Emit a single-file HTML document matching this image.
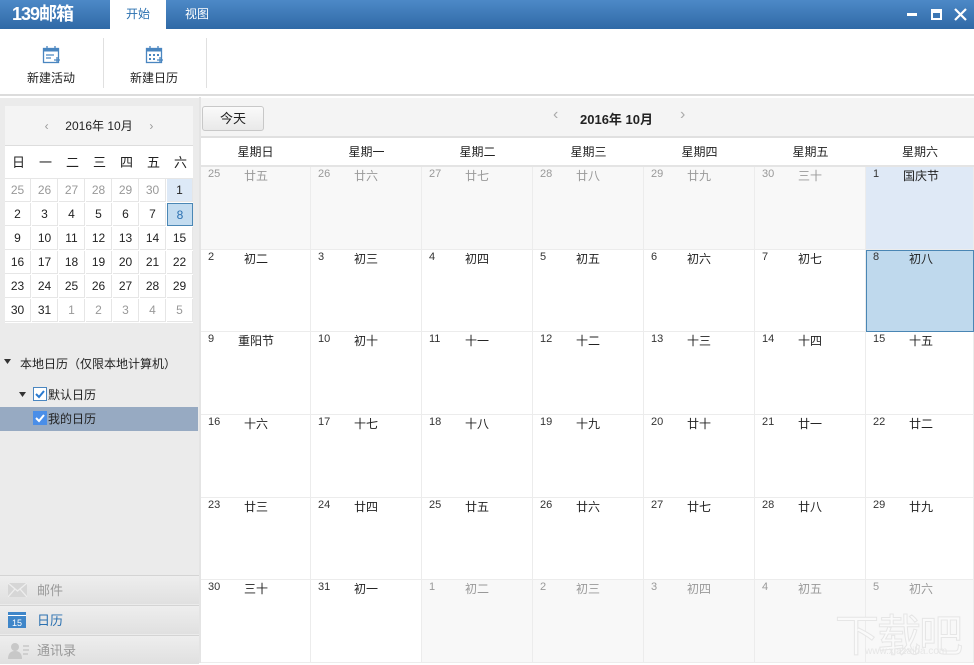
<!DOCTYPE html>
<html><head><meta charset="utf-8"><style>
*{margin:0;padding:0;box-sizing:border-box}
body{width:974px;height:663px;overflow:hidden;position:relative;background:#fff;font-family:"Liberation Sans","Noto Sans CJK SC","WenQuanYi Zen Hei",sans-serif;font-size:12px;color:#222}
.a{position:absolute}
.title{left:0;top:0;width:974px;height:29px;background:linear-gradient(#4d89c7,#2f69a6)}
.logo{left:12px;top:0;line-height:29px;color:#fff;font-weight:bold;font-size:18px;letter-spacing:-1px}
.tab1{left:110px;top:0;width:56px;height:29px;background:#fff;color:#2a70b0;text-align:center;line-height:29px}
.tab2{left:185px;top:0;width:50px;height:29px;color:#fff;line-height:29px}
.tb{top:29px;height:67px;width:974px;left:0;background:#fff;border-bottom:2px solid #dcdcdc}
.side{left:0;top:98px;width:199px;height:565px;background:#ebebeb}
.mini{left:5px;top:106px;width:188px;height:217px;background:#fff}
.mh{left:5px;top:106px;width:188px;height:40px;background:#f4f4f4;border-bottom:1px solid #ddd;text-align:center;line-height:40px;font-size:12px}
.mc{position:absolute;width:26px;height:23px;text-align:center;line-height:23px;font-size:12px;border-right:1px solid #e6e6e6;border-bottom:1px solid #e6e6e6}
.g{color:#999}
.main{left:199px;top:97px;width:775px;height:566px;border-left:2px solid #e4e4e4}
.hdr{left:201px;top:98px;width:773px;height:40px;background:#f4f4f4;border-bottom:2px solid #e0e0e0}
.today{left:202px;top:106px;width:62px;height:25px;border:1px solid #c8c8c8;border-radius:3px;background:linear-gradient(#fafafa,#e9e9e9);text-align:center;line-height:23px;font-size:13px}
.wd{position:absolute;top:138px;height:29px;width:111px;text-align:center;line-height:29px;border-bottom:2px solid #e4e4e4}
.c{position:absolute;border-right:1px solid #ececec;border-bottom:1px solid #ececec}
.c .n{position:absolute;left:7px;top:1px;font-size:11px;color:#333}
.c .l{position:absolute;left:30px;width:50px;top:0;text-align:center}
.c.o{background:#f8f8f8;color:#999}
.c.o .n{color:#999}
.nav{position:absolute;left:0;width:199px;height:29px;background:linear-gradient(#eeeeee,#e0e0e0);border-top:1px solid #d4d4d4;color:#999;font-size:13px;line-height:29px}
</style></head><body>
<div class="a title"></div>
<div class="a logo">139邮箱</div>
<div class="a tab1">开始</div>
<div class="a tab2">视图</div>
<svg class="a" style="left:905px;top:8px" width="64" height="14"><rect x="2" y="5" width="10" height="3" fill="#fff"/><rect x="26" y="1" width="11" height="11" fill="#fff"/><rect x="28" y="5" width="7" height="5" fill="#3d77b4"/><path d="M50 1L61 12M61 1L50 12" stroke="#fff" stroke-width="2.2"/></svg>
<div class="a tb"></div>
<div class="a" style="left:103px;top:38px;width:1px;height:50px;background:#e0e0e0"></div>
<div class="a" style="left:206px;top:38px;width:1px;height:50px;background:#e0e0e0"></div>
<svg class="a" style="left:42px;top:45px" width="20" height="20"><rect x="1.5" y="3.5" width="15" height="14" fill="none" stroke="#4a86c0" stroke-width="1.3"/><rect x="1.5" y="3.5" width="15" height="3" fill="#4a86c0"/><path d="M5 1v4M13 1v4M4 10h8M4 13h5M12 15h6M15 12v6" stroke="#4a86c0" stroke-width="1.3"/></svg>
<svg class="a" style="left:145px;top:45px" width="20" height="20"><rect x="1.5" y="3.5" width="15" height="14" fill="none" stroke="#4a86c0" stroke-width="1.3"/><rect x="1.5" y="3.5" width="15" height="3" fill="#4a86c0"/><path d="M5 1v4M13 1v4" stroke="#4a86c0" stroke-width="1.3"/><g fill="#4a86c0"><rect x="4" y="9" width="2" height="2"/><rect x="8" y="9" width="2" height="2"/><rect x="12" y="9" width="2" height="2"/><rect x="4" y="13" width="2" height="2"/><rect x="8" y="13" width="2" height="2"/></g><path d="M12 15h6M15 12v6" stroke="#4a86c0" stroke-width="1.3"/></svg>
<div class="a" style="left:27px;top:69px;font-size:12px">新建活动</div>
<div class="a" style="left:130px;top:69px;font-size:12px">新建日历</div>

<div class="a side"></div>
<div class="a mini"></div>
<div class="a mh"><span style="color:#999">‹</span>&nbsp;&nbsp;&nbsp;&nbsp;&nbsp;2016年 10月&nbsp;&nbsp;&nbsp;&nbsp;&nbsp;<span style="color:#999">›</span></div>
<div class="a" style="left:5px;top:148px;width:188px;height:31px;border-bottom:1px solid #e6e6e6"></div>
<div class="a" style="left:5px;top:152px;width:189px;font-size:13px;display:flex"><span style="width:27px;text-align:center">日</span><span style="width:27px;text-align:center">一</span><span style="width:27px;text-align:center">二</span><span style="width:27px;text-align:center">三</span><span style="width:27px;text-align:center">四</span><span style="width:27px;text-align:center">五</span><span style="width:27px;text-align:center">六</span></div>
<div class="a" style="left:5px;top:179px;width:189px;height:144px">
<div class="mc g" style="left:0;top:0">25</div><div class="mc g" style="left:27px;top:0">26</div><div class="mc g" style="left:54px;top:0">27</div><div class="mc g" style="left:81px;top:0">28</div><div class="mc g" style="left:108px;top:0">29</div><div class="mc g" style="left:135px;top:0">30</div><div class="mc" style="left:162px;top:0;background:#dde9f7">1</div>
<div class="mc" style="left:0;top:24px">2</div><div class="mc" style="left:27px;top:24px">3</div><div class="mc" style="left:54px;top:24px">4</div><div class="mc" style="left:81px;top:24px">5</div><div class="mc" style="left:108px;top:24px">6</div><div class="mc" style="left:135px;top:24px">7</div><div class="mc" style="left:162px;top:24px;background:#c3dcf0;border:1px solid #4a87b5;color:#2a70b0">8</div>
<div class="mc" style="left:0;top:48px">9</div><div class="mc" style="left:27px;top:48px">10</div><div class="mc" style="left:54px;top:48px">11</div><div class="mc" style="left:81px;top:48px">12</div><div class="mc" style="left:108px;top:48px">13</div><div class="mc" style="left:135px;top:48px">14</div><div class="mc" style="left:162px;top:48px">15</div>
<div class="mc" style="left:0;top:72px">16</div><div class="mc" style="left:27px;top:72px">17</div><div class="mc" style="left:54px;top:72px">18</div><div class="mc" style="left:81px;top:72px">19</div><div class="mc" style="left:108px;top:72px">20</div><div class="mc" style="left:135px;top:72px">21</div><div class="mc" style="left:162px;top:72px">22</div>
<div class="mc" style="left:0;top:96px">23</div><div class="mc" style="left:27px;top:96px">24</div><div class="mc" style="left:54px;top:96px">25</div><div class="mc" style="left:81px;top:96px">26</div><div class="mc" style="left:108px;top:96px">27</div><div class="mc" style="left:135px;top:96px">28</div><div class="mc" style="left:162px;top:96px">29</div>
<div class="mc" style="left:0;top:120px">30</div><div class="mc" style="left:27px;top:120px">31</div><div class="mc g" style="left:54px;top:120px">1</div><div class="mc g" style="left:81px;top:120px">2</div><div class="mc g" style="left:108px;top:120px">3</div><div class="mc g" style="left:135px;top:120px">4</div><div class="mc g" style="left:162px;top:120px">5</div>
</div>
<svg class="a" style="left:4px;top:359px" width="8" height="6"><path d="M0 0h7L3.5 5z" fill="#333"/></svg>
<div class="a" style="left:20px;top:355px;font-size:12px">本地日历（仅限本地计算机）</div>
<div class="a" style="left:0;top:407px;width:198px;height:24px;background:#97aac2"></div>
<svg class="a" style="left:19px;top:392px" width="8" height="6"><path d="M0 0h7L3.5 5z" fill="#333"/></svg>
<svg class="a" style="left:33px;top:387px" width="14" height="14"><rect x="0.5" y="0.5" width="13" height="13" fill="#fff" stroke="#4a86c0"/><path d="M3 7l3 3 5-6" stroke="#2a7ad0" stroke-width="2" fill="none"/></svg>
<div class="a" style="left:48px;top:386px">默认日历</div>
<svg class="a" style="left:33px;top:411px" width="14" height="14"><rect width="14" height="14" fill="#4a8ee8"/><path d="M3 7l3 3 5-6" stroke="#fff" stroke-width="2" fill="none"/></svg>
<div class="a" style="left:48px;top:410px">我的日历</div>

<div class="nav" style="top:575px"><svg class="a" style="left:8px;top:7px" width="19" height="14"><rect width="19" height="14" fill="#d6d6d6"/><path d="M0 0L9.5 8L19 0M0 14L7 6M19 14L12 6" stroke="#eee" stroke-width="1.3" fill="none"/></svg><span class="a" style="left:37px">邮件</span></div>
<div class="nav" style="top:605px;color:#2a70b0"><svg class="a" style="left:8px;top:6px" width="18" height="16"><rect width="18" height="16" fill="#3f86c9"/><rect x="0" y="3" width="18" height="1" fill="#fff"/><text x="4" y="14" font-size="9" fill="#fff" font-family="Liberation Sans">15</text></svg><span class="a" style="left:37px">日历</span></div>
<div class="nav" style="top:635px"><svg class="a" style="left:8px;top:6px" width="22" height="17"><circle cx="7" cy="5" r="4" fill="#c8c8c8"/><path d="M0 17c0-6 3-8 7-8s7 2 7 8z" fill="#c8c8c8"/><path d="M15 4h6M15 8h6M15 12h5" stroke="#c8c8c8" stroke-width="1.5"/></svg><span class="a" style="left:37px">通讯录</span></div>

<div class="a main"></div>
<div class="a hdr"></div>
<div class="a today">今天</div>
<div class="a" style="left:553px;top:106px;color:#aaa;font-size:16px">‹</div>
<div class="a" style="left:580px;top:109px;font-weight:bold;font-size:13px">2016年 10月</div>
<div class="a" style="left:680px;top:106px;color:#aaa;font-size:16px">›</div>
<div class="a" style="left:201px;top:138px;width:773px;height:29px;background:#fff"></div>
<div class="wd" style="left:200px">星期日</div><div class="wd" style="left:311px">星期一</div><div class="wd" style="left:422px">星期二</div><div class="wd" style="left:533px">星期三</div><div class="wd" style="left:644px">星期四</div><div class="wd" style="left:755px">星期五</div><div class="wd" style="left:866px;width:108px">星期六</div>

<div class="a" style="left:201px;top:167px;width:773px;height:496px">
<div class="c o" style="left:0;top:0;width:110px;height:83px"><span class="n">25</span><span class="l">廿五</span></div>
<div class="c o" style="left:110px;top:0;width:111px;height:83px"><span class="n">26</span><span class="l">廿六</span></div>
<div class="c o" style="left:221px;top:0;width:111px;height:83px"><span class="n">27</span><span class="l">廿七</span></div>
<div class="c o" style="left:332px;top:0;width:111px;height:83px"><span class="n">28</span><span class="l">廿八</span></div>
<div class="c o" style="left:443px;top:0;width:111px;height:83px"><span class="n">29</span><span class="l">廿九</span></div>
<div class="c o" style="left:554px;top:0;width:111px;height:83px"><span class="n">30</span><span class="l">三十</span></div>
<div class="c" style="left:665px;top:0;width:108px;height:83px;background:#dfe9f6"><span class="n">1</span><span class="l">国庆节</span></div>
<div class="c" style="left:0;top:83px;width:110px;height:82px"><span class="n">2</span><span class="l">初二</span></div>
<div class="c" style="left:110px;top:83px;width:111px;height:82px"><span class="n">3</span><span class="l">初三</span></div>
<div class="c" style="left:221px;top:83px;width:111px;height:82px"><span class="n">4</span><span class="l">初四</span></div>
<div class="c" style="left:332px;top:83px;width:111px;height:82px"><span class="n">5</span><span class="l">初五</span></div>
<div class="c" style="left:443px;top:83px;width:111px;height:82px"><span class="n">6</span><span class="l">初六</span></div>
<div class="c" style="left:554px;top:83px;width:111px;height:82px"><span class="n">7</span><span class="l">初七</span></div>
<div class="c" style="left:665px;top:83px;width:108px;height:82px;background:#bfd9ed;border:1px solid #4a86b4"><span class="n" style="left:6px;top:0">8</span><span class="l" style="left:29px;top:-1px">初八</span></div>
<div class="c" style="left:0;top:165px;width:110px;height:83px"><span class="n">9</span><span class="l">重阳节</span></div>
<div class="c" style="left:110px;top:165px;width:111px;height:83px"><span class="n">10</span><span class="l">初十</span></div>
<div class="c" style="left:221px;top:165px;width:111px;height:83px"><span class="n">11</span><span class="l">十一</span></div>
<div class="c" style="left:332px;top:165px;width:111px;height:83px"><span class="n">12</span><span class="l">十二</span></div>
<div class="c" style="left:443px;top:165px;width:111px;height:83px"><span class="n">13</span><span class="l">十三</span></div>
<div class="c" style="left:554px;top:165px;width:111px;height:83px"><span class="n">14</span><span class="l">十四</span></div>
<div class="c" style="left:665px;top:165px;width:108px;height:83px"><span class="n">15</span><span class="l">十五</span></div>
<div class="c" style="left:0;top:248px;width:110px;height:83px"><span class="n">16</span><span class="l">十六</span></div>
<div class="c" style="left:110px;top:248px;width:111px;height:83px"><span class="n">17</span><span class="l">十七</span></div>
<div class="c" style="left:221px;top:248px;width:111px;height:83px"><span class="n">18</span><span class="l">十八</span></div>
<div class="c" style="left:332px;top:248px;width:111px;height:83px"><span class="n">19</span><span class="l">十九</span></div>
<div class="c" style="left:443px;top:248px;width:111px;height:83px"><span class="n">20</span><span class="l">廿十</span></div>
<div class="c" style="left:554px;top:248px;width:111px;height:83px"><span class="n">21</span><span class="l">廿一</span></div>
<div class="c" style="left:665px;top:248px;width:108px;height:83px"><span class="n">22</span><span class="l">廿二</span></div>
<div class="c" style="left:0;top:331px;width:110px;height:82px"><span class="n">23</span><span class="l">廿三</span></div>
<div class="c" style="left:110px;top:331px;width:111px;height:82px"><span class="n">24</span><span class="l">廿四</span></div>
<div class="c" style="left:221px;top:331px;width:111px;height:82px"><span class="n">25</span><span class="l">廿五</span></div>
<div class="c" style="left:332px;top:331px;width:111px;height:82px"><span class="n">26</span><span class="l">廿六</span></div>
<div class="c" style="left:443px;top:331px;width:111px;height:82px"><span class="n">27</span><span class="l">廿七</span></div>
<div class="c" style="left:554px;top:331px;width:111px;height:82px"><span class="n">28</span><span class="l">廿八</span></div>
<div class="c" style="left:665px;top:331px;width:108px;height:82px"><span class="n">29</span><span class="l">廿九</span></div>
<div class="c" style="left:0;top:413px;width:110px;height:83px"><span class="n">30</span><span class="l">三十</span></div>
<div class="c" style="left:110px;top:413px;width:111px;height:83px"><span class="n">31</span><span class="l">初一</span></div>
<div class="c o" style="left:221px;top:413px;width:111px;height:83px"><span class="n">1</span><span class="l">初二</span></div>
<div class="c o" style="left:332px;top:413px;width:111px;height:83px"><span class="n">2</span><span class="l">初三</span></div>
<div class="c o" style="left:443px;top:413px;width:111px;height:83px"><span class="n">3</span><span class="l">初四</span></div>
<div class="c o" style="left:554px;top:413px;width:111px;height:83px"><span class="n">4</span><span class="l">初五</span></div>
<div class="c o" style="left:665px;top:413px;width:108px;height:83px"><span class="n">5</span><span class="l">初六</span></div>
</div>
<div class="a" style="left:835px;top:600px;font-size:44px;color:#fafafa;-webkit-text-stroke:1px #e6e6e6;letter-spacing:-2px">下载吧</div>
<div class="a" style="left:865px;top:646px;font-size:10px;color:#e6e6e6">www.xiazaiba.com</div>
</body></html>
